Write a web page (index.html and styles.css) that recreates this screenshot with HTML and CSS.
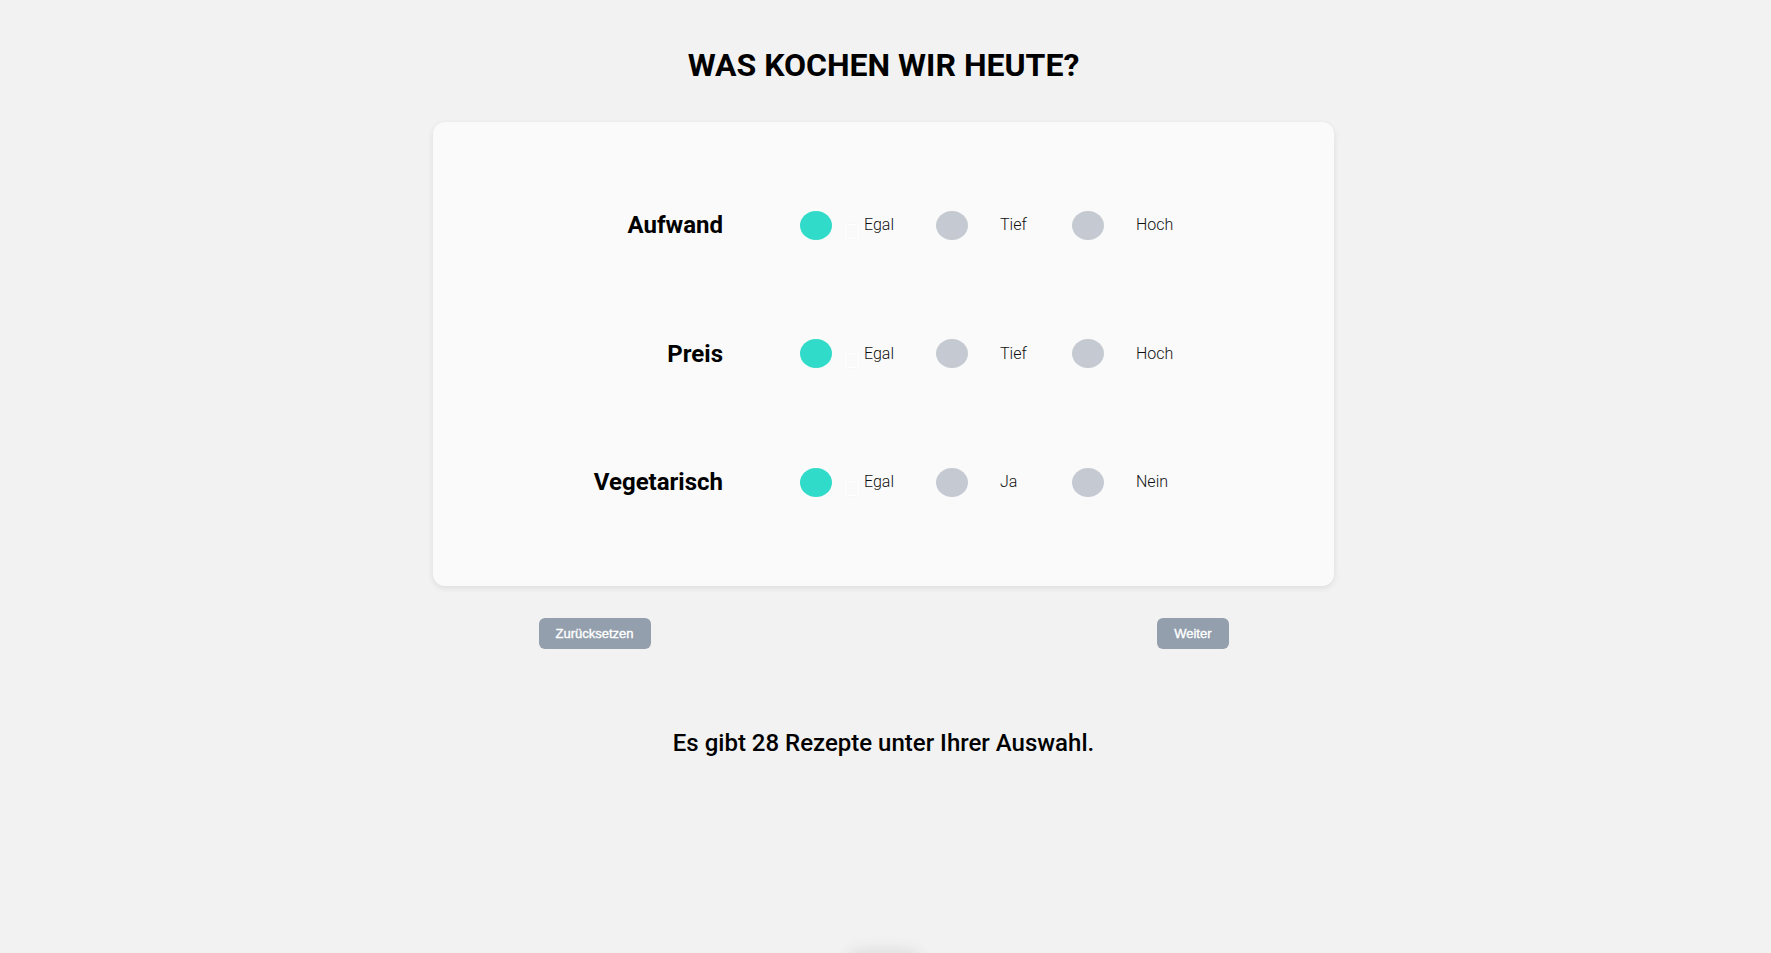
FILE: index.html
```html
<!DOCTYPE html>
<html lang="de">
<head>
<meta charset="utf-8">
<title>Was kochen wir heute?</title>
<link rel="stylesheet" href="styles.css">
</head>
<body>
<main class="page">
  <h1 class="title">WAS KOCHEN WIR HEUTE?</h1>
  <section class="card">
    <div class="row">
      <div class="row-label">Aufwand</div>
      <div class="options">
        <div class="option"><span class="dot dot-on"></span><span class="native"></span><span class="opt-label">Egal</span></div>
        <div class="option"><span class="dot"></span><span class="opt-label">Tief</span></div>
        <div class="option"><span class="dot"></span><span class="opt-label">Hoch</span></div>
      </div>
    </div>
    <div class="row">
      <div class="row-label">Preis</div>
      <div class="options">
        <div class="option"><span class="dot dot-on"></span><span class="native"></span><span class="opt-label">Egal</span></div>
        <div class="option"><span class="dot"></span><span class="opt-label">Tief</span></div>
        <div class="option"><span class="dot"></span><span class="opt-label">Hoch</span></div>
      </div>
    </div>
    <div class="row">
      <div class="row-label">Vegetarisch</div>
      <div class="options">
        <div class="option"><span class="dot dot-on"></span><span class="native"></span><span class="opt-label">Egal</span></div>
        <div class="option"><span class="dot"></span><span class="opt-label">Ja</span></div>
        <div class="option"><span class="dot"></span><span class="opt-label">Nein</span></div>
      </div>
    </div>
  </section>
  <div class="actions">
    <button class="btn" type="button">Zurücksetzen</button>
    <button class="btn" type="button">Weiter</button>
  </div>
  <p class="result">Es gibt 28 Rezepte unter Ihrer Auswahl.</p>
  <div class="below"></div>
</main>
</body>
</html>
```
FILE: styles.css
```css
html, body {
  margin: 0;
  padding: 0;
  background: #f2f2f2;
}
body {
  font-family: Roboto, "Liberation Sans", Arial, sans-serif;
  color: #000;
  overflow: hidden;
}
.page {
  display: flex;
  flex-direction: column;
  align-items: center;
  padding-right: 4px;
}
.title {
  margin: 46px 0 0;
  font-size: 32px;
  line-height: 38px;
  font-weight: 700;
  letter-spacing: 0;
}
.card {
  margin-top: 38px;
  width: 901px;
  box-sizing: border-box;
  padding: 39px 0 39px;
  background: #fafafa;
  border-radius: 12px;
  box-shadow: 0 2px 6px rgba(0, 0, 0, 0.09);
}
.row {
  height: 128.5px;
  display: flex;
  align-items: center;
}
.row-label {
  width: 290px;
  text-align: right;
  font-size: 24px;
  font-weight: 700;
  line-height: 28px;
  flex: none;
}
.options {
  display: flex;
  margin-left: 77px;
}
.option {
  width: 136px;
  display: flex;
  align-items: center;
  position: relative;
}
.dot {
  width: 32px;
  height: 29px;
  border-radius: 50%;
  background: #c5cad2;
  flex: none;
  margin-right: 32px;
}
.dot-on {
  background: #31dbc9;
}
.native {
  position: absolute;
  left: 45px;
  top: calc(50% - 1px);
  width: 12px;
  height: 13px;
  border: 1px solid #ffffff;
  border-radius: 1px;
  box-shadow: 0 0 0 0.5px rgba(0, 0, 0, 0.02);
}
.opt-label {
  font-size: 16px;
  font-weight: 300;
  line-height: 20px;
  color: #111;
}
.actions {
  margin-top: 32px;
  width: 690px;
  display: flex;
  justify-content: space-between;
}
.btn {
  height: 31px;
  padding: 0 17px;
  border: none;
  border-radius: 6px;
  background: #939fad;
  color: #fff;
  font-family: "Liberation Sans", Arial, sans-serif;
  font-size: 13px;
  font-weight: 400;
  -webkit-text-stroke: 0.35px #fff;
  cursor: pointer;
}
.result {
  margin: 80px 0 0;
  font-size: 24px;
  line-height: 28px;
  font-weight: 500;
}
.below {
  margin-top: 196px;
  width: 70px;
  height: 40px;
  border-radius: 8px;
  background: #f2f2f2;
  box-shadow: 0 0 18px rgba(0, 0, 0, 0.12);
}
```
